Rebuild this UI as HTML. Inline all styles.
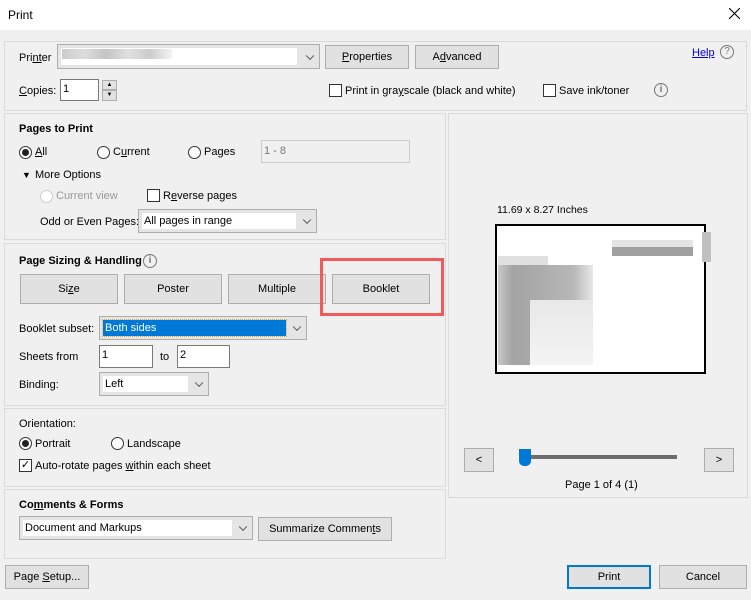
<!DOCTYPE html>
<html><head><style>
*{box-sizing:border-box;margin:0;padding:0}
body{width:751px;height:600px;background:#f0f0f0;font-family:"Liberation Sans",sans-serif;font-size:11px;color:#000;position:relative;overflow:hidden}
.a{position:absolute}
.t{position:absolute;white-space:nowrap;line-height:14px}
.panel{position:absolute;border:1px solid #dadada}
.btn{position:absolute;background:#e1e1e1;border:1px solid #adadad;text-align:center;white-space:nowrap}
.inp{position:absolute;background:#fff;border:1px solid #7a7a7a;padding-left:2px;line-height:19px}
.sel{position:absolute;background:#e5e5e5;border:1px solid #adadad}
.sel .in{position:absolute;left:3px;top:3px;bottom:3px;background:#fff;padding-left:2px;line-height:16px}
.sel .ch{position:absolute;right:6px;top:50%;width:6px;height:6px;border-right:1px solid #555;border-bottom:1px solid #555;transform:translateY(-70%) rotate(45deg)}
.rad{position:absolute;width:13px;height:13px;border:1px solid #333;border-radius:50%;background:#fff}
.rad.on::after{content:"";position:absolute;left:2px;top:2px;width:7px;height:7px;border-radius:50%;background:#222}
.cb{position:absolute;width:13px;height:13px;border:1px solid #333;background:#fff}
.info{position:absolute;width:14px;height:14px;border:1.5px solid #777;border-radius:50%;color:#777;font-size:10px;line-height:11px;text-align:center;font-weight:bold}
u{text-decoration:underline}
.h{font-weight:bold}
.px{position:absolute}
</style></head><body>
<div class="a" style="left:0;top:0;width:751px;height:30px;background:#fff"></div>
<div class="t" style="left:8px;top:8px;font-size:12px">Print</div>
<svg class="a" style="left:729px;top:8px" width="11" height="11"><path d="M0 0L11 11M11 0L0 11" stroke="#000" stroke-width="1.1"/></svg>

<div class="panel" style="left:4px;top:41px;width:743px;height:70px"></div>
<div class="t" style="left:19px;top:51px">Pri<u>nt</u>er</div>
<div class="sel" style="left:57px;top:44px;width:263px;height:25px"><div class="in" style="right:22px"></div><div class="ch"></div></div>
<div class="px" style="left:62px;top:49px;width:110px;height:10px;background:linear-gradient(90deg,#ccc,#ddd 20%,#c4c4c4 40%,#e0e0e0 60%,#ccc 80%,#f4f4f4)"></div>
<div class="btn" style="left:325px;top:45px;width:84px;height:24px;line-height:22px"><u>P</u>roperties</div>
<div class="btn" style="left:415px;top:45px;width:84px;height:24px;line-height:22px">A<u>d</u>vanced</div>
<div class="t" style="left:692px;top:46px;color:#0000ee;text-decoration:underline">Help</div>
<div class="info" style="left:720px;top:45px;font-weight:normal">?</div>
<div class="t" style="left:19px;top:84px"><u>C</u>opies:</div>
<div class="inp" style="left:60px;top:79px;width:39px;height:22px">1</div>
<div class="btn" style="left:102px;top:80px;width:15px;height:10px;font-size:6px;line-height:8px">▲</div>
<div class="btn" style="left:102px;top:90px;width:15px;height:11px;font-size:6px;line-height:9px">▼</div>
<div class="cb" style="left:329px;top:84px"></div>
<div class="t" style="left:345px;top:84px">Print in gra<u>y</u>scale (black and white)</div>
<div class="cb" style="left:543px;top:84px"></div>
<div class="t" style="left:559px;top:84px">Save ink/toner</div>
<div class="info" style="left:654px;top:83px">i</div>

<div class="panel" style="left:4px;top:113px;width:442px;height:127px"></div>
<div class="t h" style="left:19px;top:122px">Pages to Print</div>
<div class="rad on" style="left:19px;top:146px"></div><div class="t" style="left:35px;top:145px"><u>A</u>ll</div>
<div class="rad" style="left:97px;top:146px"></div><div class="t" style="left:113px;top:145px">C<u>u</u>rrent</div>
<div class="rad" style="left:188px;top:146px"></div><div class="t" style="left:204px;top:145px">Pages</div>
<div class="inp" style="left:261px;top:140px;width:149px;height:23px;background:#f0f0f0;border-color:#ccc;color:#777;line-height:21px">1 - 8</div>
<div class="t" style="left:22px;top:168px;font-size:9px">▼</div><div class="t" style="left:35px;top:168px">More Options</div>
<div class="rad" style="left:40px;top:190px;border-color:#ccc"></div><div class="t" style="left:56px;top:189px;color:#999">Current view</div>
<div class="cb" style="left:147px;top:189px"></div><div class="t" style="left:163px;top:189px">R<u>e</u>verse pages</div>
<div class="t" style="left:40px;top:215px">Odd or Even Pages:</div>
<div class="sel" style="left:138px;top:209px;width:179px;height:24px"><div class="in" style="right:20px">All pages in range</div><div class="ch"></div></div>

<div class="panel" style="left:4px;top:243px;width:442px;height:163px"></div>
<div class="t h" style="left:19px;top:254px">Page Sizing &amp; Handling</div>
<div class="info" style="left:143px;top:254px">i</div>
<div class="btn" style="left:20px;top:274px;width:98px;height:30px;line-height:28px">Si<u>z</u>e</div>
<div class="btn" style="left:124px;top:274px;width:98px;height:30px;line-height:28px">Poster</div>
<div class="btn" style="left:228px;top:274px;width:98px;height:30px;line-height:28px">Multiple</div>
<div class="btn" style="left:332px;top:274px;width:98px;height:30px;line-height:28px">Booklet</div>
<div class="a" style="left:320px;top:258px;width:124px;height:58px;border:3px solid #f25a5a"></div>
<div class="t" style="left:19px;top:322px">Booklet subset:</div>
<div class="sel" style="left:99px;top:316px;width:208px;height:24px;background:#e5e5e5"><div class="in" style="right:20px;background:#0078d7;color:#fff;outline:1px dotted #f0a030">Both sides</div><div class="ch"></div></div>
<div class="t" style="left:19px;top:350px">Sheets from</div>
<div class="inp" style="left:99px;top:345px;width:54px;height:23px">1</div>
<div class="t" style="left:160px;top:350px">to</div>
<div class="inp" style="left:177px;top:345px;width:53px;height:23px">2</div>
<div class="t" style="left:19px;top:378px">Binding:</div>
<div class="sel" style="left:99px;top:372px;width:110px;height:24px"><div class="in" style="right:20px">Left</div><div class="ch"></div></div>

<div class="panel" style="left:4px;top:408px;width:442px;height:79px"></div>
<div class="t" style="left:19px;top:417px">Orientation:</div>
<div class="rad on" style="left:19px;top:437px"></div><div class="t" style="left:35px;top:437px">Portrait</div>
<div class="rad" style="left:111px;top:437px"></div><div class="t" style="left:127px;top:437px">Landscape</div>
<div class="cb" style="left:19px;top:459px;font-size:11px;line-height:11px;text-align:center">✓</div>
<div class="t" style="left:35px;top:459px">Auto-rotate pages <u>w</u>ithin each sheet</div>

<div class="panel" style="left:4px;top:489px;width:442px;height:70px"></div>
<div class="t h" style="left:19px;top:498px">Co<u>m</u>ments &amp; Forms</div>
<div class="sel" style="left:19px;top:516px;width:234px;height:24px"><div class="in" style="right:20px">Document and Markups</div><div class="ch"></div></div>
<div class="btn" style="left:258px;top:517px;width:134px;height:24px;line-height:22px">Summarize Commen<u>t</u>s</div>

<div class="panel" style="left:448px;top:113px;width:300px;height:385px"></div>
<div class="t" style="left:497px;top:203px;font-size:10.5px">11.69 x 8.27 Inches</div>
<div class="a" style="left:495px;top:224px;width:211px;height:150px;border:2px solid #000;background:#fff"></div>
<div class="px" style="left:612px;top:240px;width:81px;height:16px;background:linear-gradient(#e4e4e4 45%,#a0a0a0 45%)"></div>
<div class="px" style="left:702px;top:232px;width:9px;height:30px;background:#c0c0c0"></div>
<div class="px" style="left:498px;top:256px;width:50px;height:10px;background:#e0e0e0"></div>
<div class="px" style="left:498px;top:265px;width:95px;height:100px;background:linear-gradient(90deg,#c8c8c8 0,#a4a4a4 15%,#aaa 40%,#b8b8b8 80%,#e8e8e8)"></div>
<div class="px" style="left:530px;top:300px;width:63px;height:65px;background:linear-gradient(#e8e8e8,#f4f4f4)"></div>
<div class="btn" style="left:464px;top:448px;width:30px;height:24px;line-height:22px">&lt;</div>
<div class="btn" style="left:704px;top:448px;width:30px;height:24px;line-height:22px">&gt;</div>
<div class="a" style="left:525px;top:455px;width:152px;height:4px;background:#6d6d6d"></div>
<div class="a" style="left:519px;top:449px;width:12px;height:17px;background:#0078d7;border-radius:0 0 5px 5px"></div>
<div class="t" style="left:565px;top:478px">Page 1 of 4 (1)</div>

<div class="btn" style="left:5px;top:565px;width:84px;height:24px;line-height:22px">Page <u>S</u>etup...</div>
<div class="btn" style="left:567px;top:565px;width:84px;height:24px;line-height:20px;border:2px solid #0078d7">Print</div>
<div class="btn" style="left:659px;top:565px;width:88px;height:24px;line-height:22px">Cancel</div>
</body></html>
